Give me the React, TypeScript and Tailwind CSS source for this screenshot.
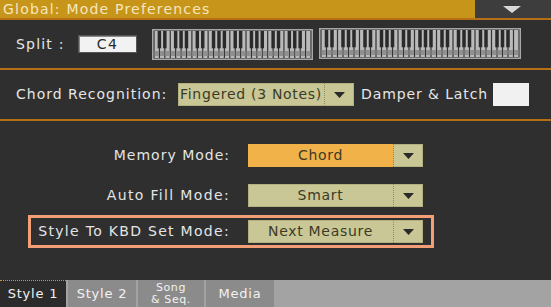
import React from "react";

const font = { fontFamily: '"DejaVu Sans", "Liberation Sans", sans-serif' };

function Keyboard({ whites, width, height }: { whites: number; width: number; height: number }) {
  const inner = width - 4;
  const w = inner / whites;
  const pattern = [1, 1, 0, 1, 1, 1, 0];
  const rects: React.ReactNode[] = [];
  for (let i = 0; i < whites; i++) {
    rects.push(
      <rect key={"w" + i} x={2 + i * w + 0.6} y={2} width={w - 1.2} height={height - 4} fill="#bababa" />
    );
    rects.push(
      <rect key={"wb" + i} x={2 + i * w + 0.6} y={height - 9} width={w - 1.2} height={5} fill="#8f8f8f" />
    );
  }
  for (let i = 0; i < whites - 1; i++) {
    if (pattern[i % 7]) {
      rects.push(
        <rect key={"b" + i} x={2 + (i + 1) * w - w * 0.32} y={2} width={w * 0.64} height={(height - 4) * 0.64} fill="#2a2a2a" />
      );
    }
  }
  return (
    <svg width={width} height={height} className="block">
      <rect x={0} y={0} width={width} height={height} fill="#2e2e2e" />
      <rect x={0.75} y={0.75} width={width - 1.5} height={height - 1.5} fill="#333" stroke="#a8a8a8" strokeWidth={1.5} />
      {rects}
    </svg>
  );
}

function Arrow() {
  return (
    <svg width="11" height="6" className="block">
      <polygon points="0,0 11,0 5.5,6" fill="#2a2a2a" />
    </svg>
  );
}

function Dropdown({ label, orange, w, align }: { label: string; orange?: boolean; w: string; align?: "left" | "center" }) {
  return (
    <div className={`flex h-[23px] ${w} bg-[#c9c795] shadow-[inset_0_0_0_1px_#b3b17e]`}>
      <div
        className={`flex-1 flex items-center ${align === "left" ? "justify-start pl-[2px]" : "justify-center"} ${
          orange ? "bg-[#f1b24a]" : ""
        } text-[14px] text-[#3c3a26] tracking-[0.7px] border-r border-dotted border-[#8d8b62] whitespace-nowrap overflow-hidden`}
      >
        {label}
      </div>
      <div className="w-[29px] flex items-center justify-center">
        <Arrow />
      </div>
    </div>
  );
}

function Row({
  label,
  value,
  orange,
  highlight,
  mt,
  track,
}: {
  label: string;
  value: string;
  orange?: boolean;
  highlight?: boolean;
  mt: string;
  track: string;
}) {
  return (
    <div
      className={`${mt} flex items-center h-[33px] w-[406px] border-[3px] ${
        highlight ? "border-[#f29f78]" : "border-transparent"
      }`}
    >
      <div className={`w-[199px] text-right text-[14px] text-[#e4e4e4] ${track} whitespace-nowrap`}>{label}</div>
      <div className="ml-[18px]">
        <Dropdown label={value} orange={orange} w="w-[175px]" />
      </div>
    </div>
  );
}

export default function App() {
  return (
    <div className="w-[551px] h-[307px] bg-[#2f2f2f] flex flex-col overflow-hidden" style={font}>
      {/* header */}
      <div className="flex h-[18px]">
        <div className="flex-1 bg-[#c8951b] text-[#f5e7bd] text-[14px] leading-[18px] pl-[3px] tracking-[1.2px] whitespace-nowrap">
          Global: Mode Preferences
        </div>
        <div className="w-[76px] bg-[#3d3d3d] flex items-center justify-center pr-[2px]">
          <svg width="18" height="7" className="block">
            <polygon points="0,0 18,0 9,7" fill="#d8d8d8" />
          </svg>
        </div>
      </div>
      <div className="h-[2px] bg-[#b66f17]" />

      {/* split row */}
      <div className="h-[48px] flex items-center">
        <div className="ml-[16px] w-[62px] text-[14px] text-[#e6e6e6] tracking-[1.2px] whitespace-nowrap">Split :</div>
        <div className="w-[59px] h-[18px] bg-[#f2f2f2] border border-[#555] shadow-[inset_1px_1px_0_#888] flex items-center justify-center text-[14px] text-[#2a2a2a] tracking-[1.5px]">
          C4
        </div>
        <div className="ml-[15px]">
          <Keyboard whites={29} width={161} height={31} />
        </div>
        <div className="ml-[6px] -mt-[2px]">
          <Keyboard whites={36} width={202} height={31} />
        </div>
      </div>
      <div className="h-[2px] bg-[#b66f17]" />

      {/* chord row */}
      <div className="h-[49px] flex items-center">
        <div className="ml-[16px] w-[162px] text-[14px] text-[#e6e6e6] tracking-[1px] whitespace-nowrap">Chord Recognition:</div>
        <div>
          <Dropdown label="Fingered (3 Notes)" w="w-[176px]" align="left" />
        </div>
        <div className="ml-[7px] w-[132px] text-[14px] text-[#e6e6e6] tracking-[0.9px] whitespace-nowrap">Damper &amp; Latch</div>
        <div className="w-[36px] h-[23px] bg-[#f1f1f1]" />
      </div>
      <div className="h-[2px] bg-[#b66f17]" />

      {/* main */}
      <div className="flex-1 flex flex-col pl-[28px]">
        <Row label="Memory Mode:" value="Chord" orange mt="mt-[18px]" track="tracking-[1px]" />
        <Row label="Auto Fill Mode:" value="Smart" mt="mt-[7px]" track="tracking-[1.35px]" />
        <Row label="Style To KBD Set Mode:" value="Next Measure" highlight mt="mt-[3px]" track="tracking-[1.3px]" />
      </div>

      {/* tabs */}
      <div className="h-[27px] flex bg-[#a3a3a3]">
        <div className="w-[66px] bg-[#2b2b2b] border-t border-dotted border-[#c89a2a] flex items-center justify-center text-[13px] text-[#f0f0f0] tracking-[0.8px]">
          Style 1
        </div>
        <div className="ml-[2px] w-[68px] bg-[#8b8b8b] flex items-center justify-center text-[13px] text-[#f2f2f2] tracking-[0.8px]">
          Style 2
        </div>
        <div className="ml-[2px] w-[66px] bg-[#8b8b8b] flex flex-col items-center justify-center text-[11px] leading-[12px] text-[#f2f2f2] tracking-[0.6px]">
          <span>Song</span>
          <span>&amp; Seq.</span>
        </div>
        <div className="ml-[2px] w-[68px] bg-[#8b8b8b] flex items-center justify-center text-[13px] text-[#f2f2f2] tracking-[0.8px]">
          Media
        </div>
        <div className="flex-1 bg-[#a3a3a3]" />
      </div>
    </div>
  );
}
